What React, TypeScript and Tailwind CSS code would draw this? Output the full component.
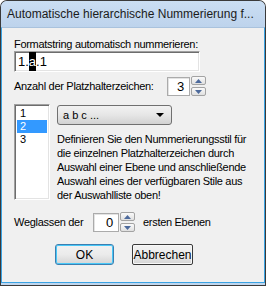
import React from "react";

function Spin({ up }: { up: boolean }) {
  return (
    <div className="w-[15px] h-[9px] border border-[#a3a3a3] rounded-[2px] bg-gradient-to-b from-[#fafafa] to-[#e0e0e0] flex items-center justify-center">
      <svg width="7" height="4" viewBox="0 0 7 4">
        {up ? (
          <polygon points="0,4 7,4 3.5,0" fill="#4d6a9c" />
        ) : (
          <polygon points="0,0 7,0 3.5,4" fill="#4d6a9c" />
        )}
      </svg>
    </div>
  );
}

function SpinBox({ value, w }: { value: string; w: string }) {
  return (
    <div className="flex items-center gap-[1px]">
      <div
        className={`${w} h-[19px] border border-[#ababab] bg-white shadow-[inset_1px_1px_0_#e3e3e3] flex items-center justify-end pr-[5px] text-[13px] leading-none`}
      >
        {value}
      </div>
      <div className="flex flex-col gap-[2px]">
        <Spin up />
        <Spin up={false} />
      </div>
    </div>
  );
}

export default function App() {
  return (
    <div
      className="w-[266px] h-[286px] bg-[#3a3a3a] rounded-t-[7px] p-[1px] overflow-hidden text-black"
      style={{ fontFamily: '"Liberation Sans", Arial, sans-serif' }}
    >
      <div className="h-full flex flex-col rounded-t-[6px] bg-[#c0d6ee] overflow-hidden">
        <div className="h-[26px] flex items-center pl-[6px] text-[12px] whitespace-nowrap text-[#1b1b1b] bg-gradient-to-b from-[#cadef3] to-[#bdd3ec]">
          Automatische hierarchische Nummerierung f...
        </div>
        <div className="flex-1 bg-[#f0f0f0] border-x border-b border-[#3aa3e3] border-t border-t-[#a9c2dd] mb-[2px] px-[12px] text-[11px] tracking-[-0.3px] flex flex-col">
          <div className="mt-[10px] h-[13px] leading-[13px]">Formatstring automatisch nummerieren:</div>
          <div className="mt-0 w-[186px] h-[21px] border border-[#a0a0a0] border-b-white border-r-white shadow-[inset_1px_1px_0_#6d6d6d,inset_-1px_-1px_0_#e3e3e3] bg-white flex items-center pl-[3px] text-[13px] tracking-normal">
            <span>1.</span>
            <span className="bg-black text-white">a</span>
            <span>.1</span>
          </div>
          <div className="mt-[4px] flex items-center h-[20px]">
            <div className="w-[153px]">Anzahl der Platzhalterzeichen:</div>
            <SpinBox value="3" w="w-[23px]" />
          </div>
          <div className="mt-[8px] flex gap-[7px]">
            <div className="w-[36px] h-[96px] border border-[#a0a0a0] border-b-white border-r-white shadow-[inset_1px_1px_0_#6d6d6d,inset_-1px_-1px_0_#e3e3e3] bg-white pt-[2px] px-[2px] flex flex-col">
              <div className="h-[13px] leading-[13px] pl-[3px]">1</div>
              <div className="h-[13px] leading-[13px] pl-[3px] bg-[#3399ff] text-white">2</div>
              <div className="h-[13px] leading-[13px] pl-[3px]">3</div>
            </div>
            <div className="flex flex-col">
              <div className="w-[115px] h-[20px] mt-[1px] rounded-[3px] border border-[#707070] bg-gradient-to-b from-[#f2f2f2] via-[#e6e6e6] to-[#d2d2d2] flex items-center justify-between pl-[5px] pr-[7px] tracking-normal text-[11px]">
                <span>a b c ...</span>
                <svg width="8" height="4" viewBox="0 0 8 4">
                  <polygon points="0,0 8,0 4,4" fill="#000" />
                </svg>
              </div>
              <div className="mt-[7px] leading-[14px] whitespace-nowrap">
                Definieren Sie den Nummerierungsstil für
                <br />
                die einzelnen Platzhalterzeichen durch
                <br />
                Auswahl einer Ebene und anschließende
                <br />
                Auswahl eines der verfügbaren Stile aus
                <br />
                der Auswahlliste oben!
              </div>
            </div>
          </div>
          <div className="mt-[10px] flex items-center h-[20px]">
            <div className="w-[79px]">Weglassen der</div>
            <SpinBox value="0" w="w-[26px]" />
            <div className="ml-[8px]">ersten Ebenen</div>
          </div>
          <div className="mt-[12px] flex pl-[41px] gap-[18px] tracking-normal">
            <div className="w-[59px] h-[21px] rounded-[3px] border border-[#3c7fb1] shadow-[inset_0_0_0_1px_#48c8f8] bg-gradient-to-b from-[#f2f2f2] via-[#ebebeb] to-[#d5d5d5] flex items-center justify-center text-[12px]">
              OK
            </div>
            <div className="w-[61px] h-[21px] rounded-[2px] border border-[#3a3a3a] shadow-[inset_0_0_0_1px_#f8f8f8] bg-gradient-to-b from-[#f2f2f2] via-[#ebebeb] to-[#d5d5d5] flex items-center justify-center text-[12px]">
              Abbrechen
            </div>
          </div>
        </div>
      </div>
    </div>
  );
}
